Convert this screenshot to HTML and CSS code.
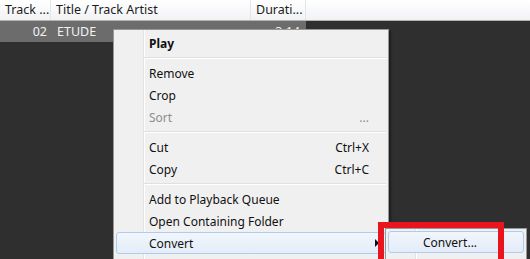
FILE: index.html
```html
<!DOCTYPE html>
<html lang="en">
<head>
    <meta charset="UTF-8">
    <title>Track List</title>
    <link rel="stylesheet" href="styles.css">
</head>
<body>

<div class="list">
    <div class="list-header">
        <div class="col col-track">Track ...</div>
        <div class="col col-title">Title / Track Artist</div>
        <div class="col col-dur">Durati...</div>
        <div class="col col-rest"></div>
    </div>
    <div class="list-row">
        <div class="col col-track num">02</div>
        <div class="col col-title">ETUDE</div>
        <div class="col col-dur num">3:14</div>
    </div>
</div>

<div class="menu">
    <div class="item default">Play</div>
    <div class="sep"></div>
    <div class="item">Remove</div>
    <div class="item">Crop</div>
    <div class="item disabled">Sort <span class="key">...</span></div>
    <div class="sep"></div>
    <div class="item">Cut <span class="key">Ctrl+X</span></div>
    <div class="item">Copy <span class="key">Ctrl+C</span></div>
    <div class="sep"></div>
    <div class="item">Add to Playback Queue</div>
    <div class="item">Open Containing Folder</div>
    <div class="item active">Convert <span class="arrow"></span></div>
</div>

<div class="submenu">
    <div class="item active">Convert...</div>
</div>

<div class="mark"></div>

</body>
</html>
```

FILE: styles.css
```css
body {
    margin: 0;
    background: #2f2f2f;
    font-family: 'Noto Sans', 'Open Sans', sans-serif;
    font-size: 12px;
    width: 530px;
    height: 259px;
    overflow: hidden;
    position: relative;
}
.list-header {
    display: flex;
    height: 20px;
    background: linear-gradient(to bottom, #ffffff, #f1f2f4);
    border-bottom: 1px solid #b4b4b4;
    color: #1c1c1c;
    font-size: 12.5px;
}
.list-header .col {
    border-right: 1px solid #e4e5e7;
    line-height: 20px;
    padding-left: 5px;
    box-sizing: border-box;
    white-space: nowrap;
}
.col-track { width: 51px; }
.col-title { width: 200px; }
.col-dur { width: 55px; }
.col-rest { flex: 1; border-right: none !important; }
.list-row {
    display: flex;
    width: 306px;
    height: 21px;
    background: #6c6c6c;
    color: #f2f2f2;
    line-height: 21px;
    font-size: 12.5px;
}
.list-row .col {
    box-sizing: border-box;
    white-space: nowrap;
}
.list-row .col-track { padding-right: 4px; }
.list-row .col-title { padding-left: 6px; }
.list-row .col-dur { padding-right: 6px; }
.num { text-align: right; }

.menu {
    position: absolute;
    left: 113px;
    top: 29px;
    width: 276px;
    height: 240px;
    background: #f0f0f0 linear-gradient(to right, transparent 29px, #e2e3e3 29px, #e2e3e3 30px, #ffffff 30px, #ffffff 31px, transparent 31px);
    border: 1px solid #979797;
    padding: 2px;
    box-sizing: border-box;
    box-shadow: 2px 2px 2px rgba(0, 0, 0, 0.35);
    color: #111;
}
.item {
    position: relative;
    height: 22px;
    line-height: 22px;
    padding-left: 32px;
    padding-right: 16px;
    display: flex;
    justify-content: space-between;
    box-sizing: border-box;
    border: 1px solid transparent;
    border-radius: 3px;
}
.item.default { font-weight: bold; }
.item.disabled { color: #8d8d8d; }
.key { color: inherit; }
.item.active {
    background: linear-gradient(to bottom, #f2f6fc, #e3ecf8);
    border-color: #aeccf0;
}
.sep {
    height: 8px;
    margin-left: 28px;
    background: linear-gradient(to bottom, transparent 3px, #e0e0e0 3px, #e0e0e0 4px, #ffffff 4px, #ffffff 5px, transparent 5px);
}
.arrow {
    position: absolute;
    right: 6px;
    top: 6px;
    width: 0;
    height: 0;
    border-top: 4px solid transparent;
    border-bottom: 4px solid transparent;
    border-left: 4px solid #111;
}

.submenu {
    position: absolute;
    left: 385px;
    top: 228px;
    width: 142px;
    height: 40px;
    background: #f0f0f0 linear-gradient(to right, transparent 29px, #e2e3e3 29px, #e2e3e3 30px, #ffffff 30px, #ffffff 31px, transparent 31px);
    border: 1px solid #979797;
    padding: 2px;
    box-sizing: border-box;
    color: #111;
}
.submenu .item {
    padding-left: 34px;
}

.mark {
    position: absolute;
    left: 378px;
    top: 222px;
    width: 126px;
    height: 45px;
    border: 6px solid #e8141e;
    box-sizing: border-box;
}
```
